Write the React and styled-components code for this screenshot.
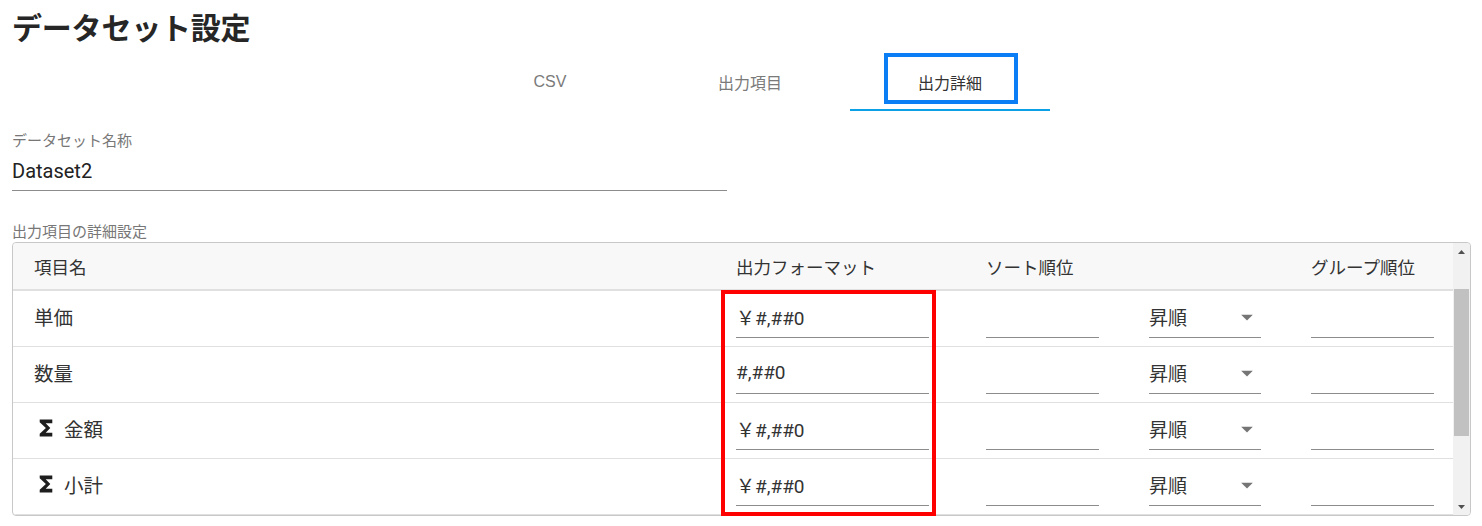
import React from "react";
import styled, { createGlobalStyle } from "styled-components";

const Global = createGlobalStyle`
  html, body { margin: 0; padding: 0; background: #fff; }
  body {
    font-family: Roboto, "Noto Sans CJK JP", sans-serif;
    color: #333;
  }
`;

const Page = styled.div`
  width: 1482px;
  height: 526px;
  overflow: hidden;
  box-sizing: border-box;
  padding: 0 11px 0 12px;
`;

const Title = styled.h1`
  margin: 0;
  padding-top: 11px;
  height: 52px;
  box-sizing: border-box;
  font-size: 30px;
  line-height: 36px;
  font-weight: 700;
  color: #262626;
  letter-spacing: -0.2px;
`;

const Tabs = styled.div`
  display: flex;
  padding-left: 438px;
  height: 59px;
`;

const Tab = styled.div`
  position: relative;
  width: 200px;
  height: 59px;
  box-sizing: border-box;
  display: flex;
  align-items: center;
  justify-content: center;
  font-family: "Liberation Sans", "Noto Sans CJK JP", sans-serif;
  font-size: 16px;
  color: ${(p) => (p.$active ? "#333" : "#7a7a7a")};
  border-bottom: 2px solid ${(p) => (p.$active ? "#0aa1e6" : "transparent")};
  padding-top: 2px;
`;

const FocusMark = styled.div`
  position: absolute;
  left: 34px;
  top: 1px;
  width: 134px;
  height: 51px;
  box-sizing: border-box;
  border: 4px solid #0b7df5;
  pointer-events: none;
`;

const Field = styled.div`
  margin-top: 20px;
  width: 715px;
`;

const FieldLabel = styled.div`
  font-size: 15px;
  line-height: 20px;
  color: #777;
`;

const FieldValue = styled.div`
  font-size: 20px;
  line-height: 28px;
  padding: 6px 0 5px;
  color: #222;
  border-bottom: 1px solid #8c8c8c;
`;

const SectionLabel = styled.div`
  margin-top: 31px;
  font-size: 15px;
  line-height: 20px;
  color: #777;
`;

const Box = styled.div`
  position: relative;
  width: 1459px;
  height: 274px;
  box-sizing: border-box;
  border: 1px solid #c8c8c8;
  border-radius: 4px;
  display: flex;
`;

const TableArea = styled.div`
  flex: 1;
  overflow: hidden;
  border-radius: 4px 0 0 4px;
`;

const Grid = styled.div`
  display: grid;
  grid-template-columns: 702px 250px 163px 162px 123px;
  padding-left: 21px;
  align-items: center;
`;

const HeadRow = styled(Grid)`
  height: 46px;
  background: #f8f8f8;
  border-bottom: 2px solid #e0e0e0;
  font-size: 17.5px;
  color: #333;
`;

const Row = styled(Grid)`
  height: 55px;
  border-bottom: 1px solid #e0e0e0;
  font-size: 19.5px;
  color: #333;
`;

const NameCell = styled.div`
  display: flex;
  align-items: center;
  gap: 6px;
  padding-bottom: 5px;
`;

const Input = styled.div`
  width: ${(p) => p.$w}px;
  height: 46px;
  box-sizing: border-box;
  align-self: end;
  margin-bottom: 8px;
  display: flex;
  align-items: center;
  padding: 4px 0 0 0;
  border-bottom: 1px solid #8c8c8c;
  font-size: 19px;
  color: #333;
  justify-content: space-between;
`;

const Caret = styled.svg`
  width: 28px;
  height: 28px;
  fill: #757575;
  margin-right: 0;
`;

const Scrollbar = styled.div`
  width: 17px;
  background: #f1f1f1;
  display: flex;
  flex-direction: column;
  border-radius: 0 4px 4px 0;
`;

const ScrollBtn = styled.div`
  height: 17px;
  display: flex;
  align-items: center;
  justify-content: center;
`;

const Track = styled.div`
  flex: 1;
  padding-top: 29px;
`;

const Thumb = styled.div`
  height: 147px;
  margin: 0 1px;
  background: #c1c1c1;
`;

const Mark = styled.div`
  position: absolute;
  left: 708px;
  top: 47px;
  width: 215px;
  height: 226px;
  box-sizing: border-box;
  border: 4px solid #ff0000;
  pointer-events: none;
`;

const SigmaIcon = () => (
  <svg width="24" height="24" viewBox="0 0 24 24" fill="#1e1e1e">
    <path d="M18.3 3.6H5.7v2.6l6.2 5.8-6.2 5.8v2.6h12.6v-3.6h-6.6l4.6-4.8-4.6-4.8h6.6z" />
  </svg>
);

const rows = [
  { name: "単価", sum: false, fmt: "￥#,##0" },
  { name: "数量", sum: false, fmt: "#,##0" },
  { name: "金額", sum: true, fmt: "￥#,##0" },
  { name: "小計", sum: true, fmt: "￥#,##0" },
];

export default function App() {
  return (
    <>
      <Global />
      <Page>
        <Title>データセット設定</Title>
        <Tabs>
          <Tab>CSV</Tab>
          <Tab>出力項目</Tab>
          <Tab $active>
            出力詳細
            <FocusMark />
          </Tab>
        </Tabs>
        <Field>
          <FieldLabel>データセット名称</FieldLabel>
          <FieldValue>Dataset2</FieldValue>
        </Field>
        <SectionLabel>出力項目の詳細設定</SectionLabel>
        <Box>
          <TableArea>
            <HeadRow>
              <div>項目名</div>
              <div>出力フォーマット</div>
              <div>ソート順位</div>
              <div />
              <div>グループ順位</div>
            </HeadRow>
            {rows.map((r) => (
              <Row key={r.name}>
                <NameCell>
                  {r.sum && <SigmaIcon />}
                  {r.name}
                </NameCell>
                <Input $w={193}>{r.fmt}</Input>
                <Input $w={113} />
                <Input $w={112}>
                  昇順
                  <Caret viewBox="0 0 24 24">
                    <path d="M7 10l5 5 5-5z" />
                  </Caret>
                </Input>
                <Input $w={123} />
              </Row>
            ))}
          </TableArea>
          <Scrollbar>
            <ScrollBtn>
              <svg width="7" height="4" viewBox="0 0 7 4" fill="#505050">
                <path d="M0 4L3.5 0 7 4z" />
              </svg>
            </ScrollBtn>
            <Track>
              <Thumb />
            </Track>
            <ScrollBtn>
              <svg width="7" height="4" viewBox="0 0 7 4" fill="#505050">
                <path d="M0 0L3.5 4 7 0z" />
              </svg>
            </ScrollBtn>
          </Scrollbar>
          <Mark />
        </Box>
      </Page>
    </>
  );
}
